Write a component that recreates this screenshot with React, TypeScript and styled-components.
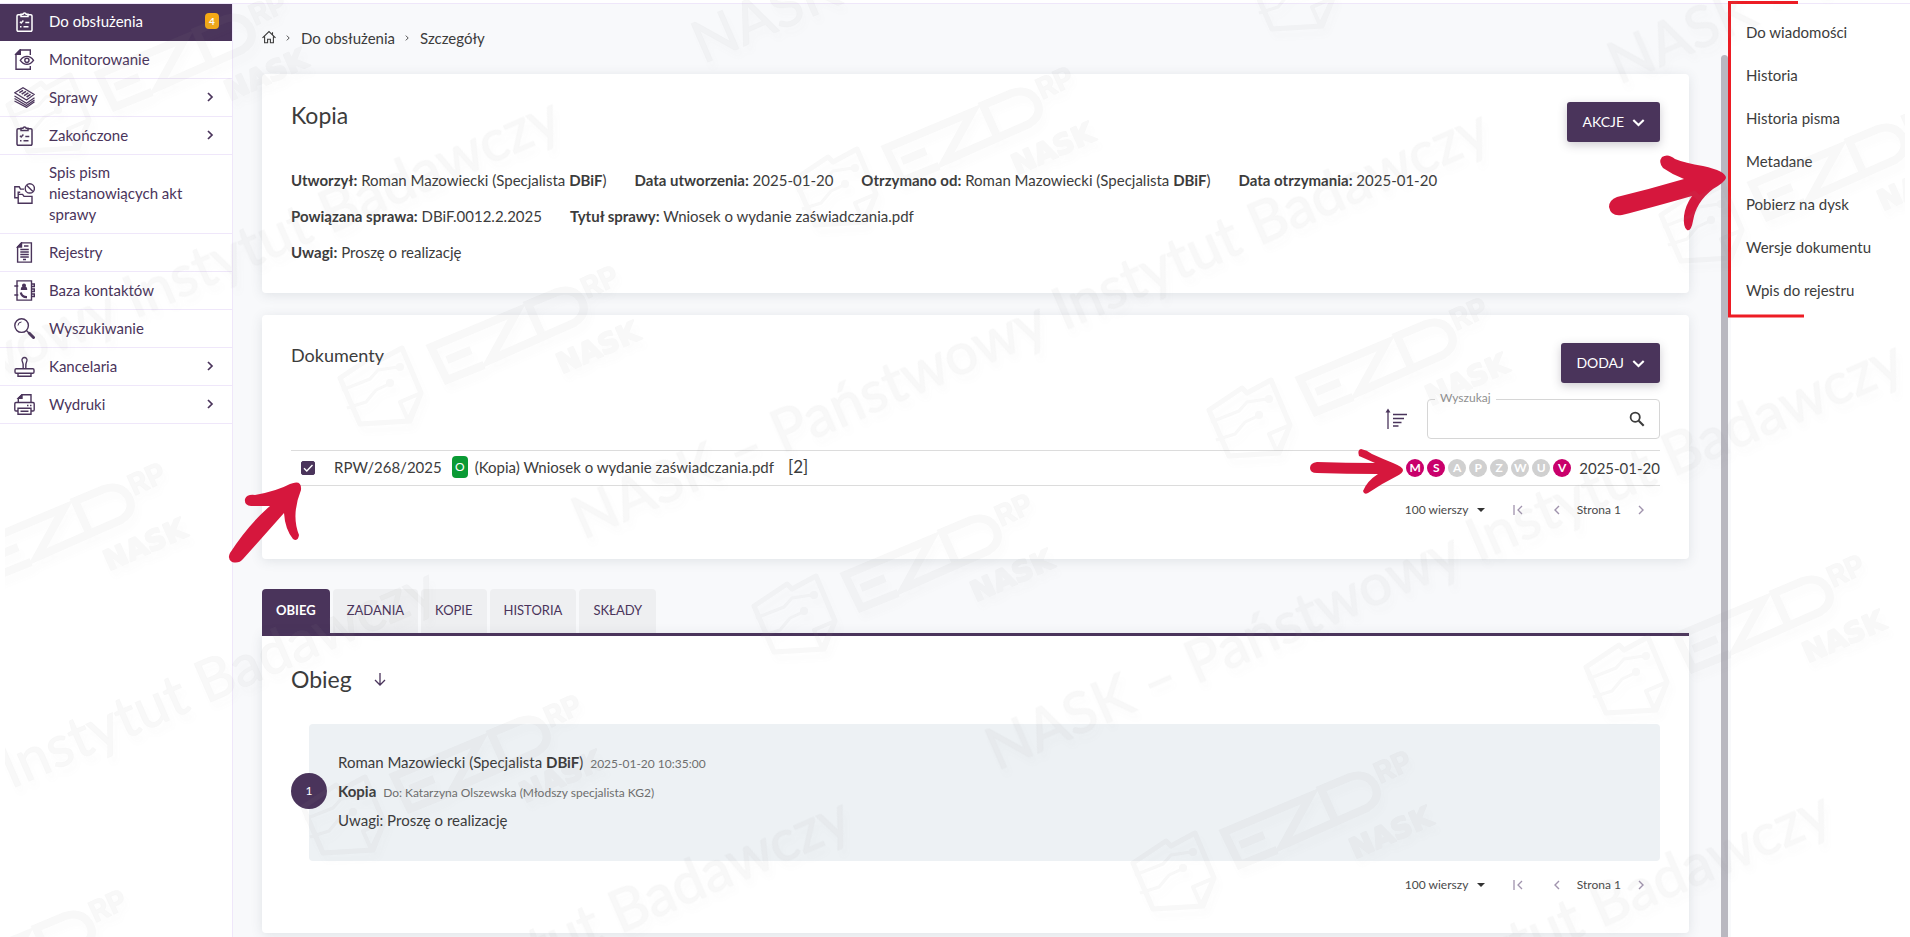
import React from 'react';
import styled, { createGlobalStyle, css } from 'styled-components';

const purple = '#4a345b';
const crimson = '#d6173d';
const ink = '#3c3c3c';

const GlobalStyle = createGlobalStyle`
  * { box-sizing: border-box; }
  body {
    margin: 0;
    background: #fff;
    color: ${ink};
    font: 400 15px/20px Lato, "Noto Sans", sans-serif;
  }
  button, input, select { font: inherit; color: inherit; }
  a { color: inherit; text-decoration: none; }
  h1, h2, p, ul, ol { margin: 0; padding: 0; font-weight: 400; }
  ul, ol { list-style: none; }
  b { font-weight: 700; }
`;

const Shell = styled.div`
  position: relative;
  display: grid;
  grid-template-columns: 233px minmax(0, 1fr) 182px;
  height: 100vh;
  padding-top: 4px;
  overflow: hidden;
  background: linear-gradient(#fff 0 3px, #efe7fa 3px 4px, #fff 4px);
`;

/* ---------- sidebar ---------- */

const Sidebar = styled.nav`
  border-right: 1px solid #efe7fa;
  background: #fff;
`;

const NavItem = styled.a<{ $active?: boolean }>`
  display: flex;
  align-items: center;
  gap: 14px;
  min-height: ${(p) => (p.$active ? 37 : 38)}px;
  padding: 7px 12px 8px 14px;
  border-bottom: 1px solid #efe7fa;
  color: ${purple};
  line-height: 21px;
  svg { flex: none; }
  ${(p) =>
    p.$active &&
    css`
      padding: 6px 13px 8px 14px;
      background: ${purple};
      border-color: ${purple};
      color: #fff;
    `}
`;

const NavLabel = styled.span`
  flex: 1;
  max-width: 150px;
  margin-right: auto;
`;

const Count = styled.span`
  display: grid;
  place-items: center;
  width: 14px;
  height: 16px;
  border-radius: 4px;
  background: #f5a914;
  color: #fff;
  font-size: 10px;
  font-weight: 700;
  line-height: 16px;
`;

const ChevronSlot = styled.span`
  display: grid;
  place-items: center;
  width: 20px;
`;

/* ---------- main column ---------- */

const Main = styled.main`
  display: flex;
  flex-direction: column;
  min-width: 0;
  padding: 24px 39px 0 29px;
  background: #f8f9fb;
`;

const Breadcrumbs = styled.ol`
  display: flex;
  align-items: center;
  gap: 9px;
  height: 20px;
  margin-bottom: 26px;
  li { display: flex; align-items: center; gap: 10px; }
`;

const Card = styled.section`
  flex: none;
  padding: 28px 29px 0;
  border-radius: 4px;
  background: #fff;
  box-shadow: 0 2px 12px rgba(60, 75, 90, 0.13);
`;

const DetailsCard = styled(Card)`
  min-height: 219px;
  margin-bottom: 22px;
`;

const DocumentsCard = styled(Card)`
  min-height: 244px;
  margin-bottom: 30px;
`;

const CardHead = styled.header`
  display: flex;
  justify-content: space-between;
  align-items: flex-start;
`;

const Title = styled.h1`
  font-size: 23px;
  line-height: 26px;
`;

const Subtitle = styled.h2`
  font-size: 18px;
  line-height: 24px;
`;

const PrimaryButton = styled.button`
  display: flex;
  align-items: center;
  gap: 8px;
  height: 40px;
  padding: 0 15px;
  border: 0;
  border-radius: 3px;
  background: ${purple};
  color: #fff;
  font-size: 14px;
  box-shadow: 0 3px 10px rgba(60, 50, 70, 0.25);
`;

const Facts = styled.div`
  display: grid;
  gap: 16px;
  margin-top: 28px;
`;

const FactRow = styled.div`
  display: flex;
  flex-wrap: wrap;
  gap: 28px;
`;

const Tools = styled.div`
  display: flex;
  justify-content: flex-end;
  align-items: center;
  gap: 20px;
  margin: 16px 0 11px;
`;

const IconButton = styled.button`
  display: grid;
  place-items: center;
  padding: 0;
  border: 0;
  background: none;
`;

const SearchField = styled.div`
  position: relative;
  display: flex;
  align-items: center;
  width: 233px;
  height: 40px;
  padding: 0 14px;
  border: 1px solid #d6d6d6;
  border-radius: 4px;
  label {
    position: absolute;
    top: -10px;
    left: 7px;
    padding: 0 5px;
    background: #fff;
    color: #8f8f8f;
    font-size: 12px;
    line-height: 16px;
  }
  input {
    flex: 1;
    min-width: 0;
    border: 0;
    outline: 0;
    background: none;
  }
`;

const DocumentTable = styled.table`
  width: 100%;
  border-collapse: collapse;
  td {
    height: 35px;
    padding: 0 0 2px;
    border-top: 1px solid #dcdcdc;
    border-bottom: 1px solid #dcdcdc;
    white-space: nowrap;
  }
`;

const DocumentName = styled.div`
  display: flex;
  align-items: center;
  gap: 7px;
`;

const Register = styled.a`
  margin-right: 3px;
`;

const OriginTag = styled.span`
  display: grid;
  place-items: center;
  width: 16px;
  height: 22px;
  border-radius: 4px;
  background: #0a9a34;
  color: #fff;
  font-size: 12px;
`;

const Versions = styled.span`
  margin-left: 7px;
  font-size: 17px;
`;

const CheckCell = styled.td`
  position: relative;
  width: 43px;
`;

const Tick = styled.input`
  display: block;
  appearance: none;
  width: 14px;
  height: 14px;
  margin: 1px 0 0 10px;
  border: 1px solid ${purple};
  border-radius: 2px;
  &:checked {
    background: ${purple}
      url("data:image/svg+xml,%3Csvg xmlns='http://www.w3.org/2000/svg' viewBox='0 0 12 12'%3E%3Cpath d='M2 6.200l2.800 2.800L10.500 3' fill='none' stroke='white' stroke-width='1.400'/%3E%3C/svg%3E");
  }
`;

const FlagList = styled.div`
  position: relative;
  display: flex;
  align-items: center;
  justify-content: flex-end;
  gap: 3px;
  padding-top: 1px;
  time { margin-left: 5px; }
`;

const Flag = styled.span<{ $on: boolean }>`
  display: grid;
  place-items: center;
  width: 18px;
  height: 18px;
  border-radius: 50%;
  background: ${(p) => (p.$on ? '#c9006b' : '#d0d0d0')};
  color: #fff;
  font-size: 12px;
  font-weight: 700;
  line-height: 18px;
`;

const Pager = styled.div<{ $top: number }>`
  display: flex;
  justify-content: flex-end;
  align-items: center;
  height: 20px;
  margin-top: ${(p) => p.$top}px;
  padding-right: 14px;
  font-size: 12px;
  color: #4a4a4a;
`;

const PageSize = styled.span`
  display: flex;
  align-items: center;
  gap: 6px;
  margin-right: 28px;
  select {
    appearance: none;
    width: 66px;
    padding: 0;
    border: 0;
    background: none;
  }
`;

const PagerStep = styled(IconButton)<{ $before?: number; $after?: number }>`
  margin: 0 ${(p) => p.$after || 0}px 0 ${(p) => p.$before || 0}px;
  color: #a093ad;
`;

/* ---------- tabs and flow panel ---------- */

const Tabs = styled.div`
  display: flex;
  gap: 3px;
  height: 44px;
  flex: none;
`;

const Tab = styled.button<{ $active?: boolean }>`
  padding: 0 14px 2px;
  border: 0;
  border-radius: 4px 4px 0 0;
  background: ${(p) => (p.$active ? purple : '#eeeff1')};
  color: ${(p) => (p.$active ? '#fff' : purple)};
  font-size: 13px;
  font-weight: ${(p) => (p.$active ? 700 : 400)};
`;

const FlowPanel = styled(Card)`
  min-height: 300px;
  padding-top: 30px;
  border-top: 3px solid ${purple};
  border-radius: 0 0 4px 4px;
`;

const FlowHead = styled.header`
  display: flex;
  align-items: center;
  gap: 22px;
`;

const Step = styled.article`
  display: flex;
  align-items: center;
  margin: 32px 0 0 18px;
  min-height: 137px;
  padding-bottom: 3px;
  border-radius: 4px;
  background: #edf1f4;
`;

const StepNumber = styled.span`
  display: grid;
  place-items: center;
  flex: none;
  width: 36px;
  height: 36px;
  margin: 0 11px 0 -18px;
  border-radius: 50%;
  background: ${purple};
  color: #fff;
  font-size: 12px;
`;

const StepBody = styled.div`
  display: grid;
  gap: 9px;
`;

const Small = styled.small`
  margin-left: 3px;
  color: #6e6e6e;
  font-size: 12px;
  line-height: 12px;
`;

/* ---------- right column ---------- */

const Aside = styled.aside`
  position: relative;
  display: flex;
  background: #fff;
`;

const ScrollTrack = styled.div`
  flex: none;
  width: 3px;
  background: #f8f9fb;
`;

const ScrollThumb = styled.div`
  position: absolute;
  top: 51px;
  bottom: 0;
  left: -7px;
  width: 7px;
  border-radius: 4px 4px 0 0;
  background: #b9b8c0;
`;

const ActionMenu = styled.ul`
  display: grid;
  align-content: start;
  gap: 23px;
  padding: 18px 0 0 15px;
`;

/* ---------- overlays ---------- */

const Overlay = styled.svg<{ $x: number; $y: number }>`
  position: absolute;
  left: ${(p) => p.$x}px;
  top: ${(p) => p.$y}px;
  z-index: 2;
  overflow: visible;
  pointer-events: none;
`;

/* Arrow that points at the row's status flags from their left. */
const FlagArrow = styled.svg`
  position: absolute;
  right: 257px;
  top: -8px;
  z-index: 2;
  overflow: visible;
  pointer-events: none;
`;

const WatermarkLayer = styled.svg`
  position: absolute;
  top: 0;
  left: 5px;
  width: calc(100% - 10px);
  height: 100%;
  z-index: 3;
  opacity: 0.07;
  pointer-events: none;
`;

/* ---------- icons ---------- */

const Icon = ({ children, size = 21, box = 21, width = 1.4 }: { children: React.ReactNode; size?: number; box?: number; width?: number }) => (
  <svg width={size} height={size} viewBox={`0 0 ${box} ${box}`} fill="none" stroke="currentColor" strokeWidth={width} aria-hidden="true">
    {children}
  </svg>
);

const ClipboardIcon = () => (
  <Icon width={1.5}>
    <path d="M7 3.700H4.200A1.200 1.200 0 0 0 3 4.900V19a1.200 1.200 0 0 0 1.200 1.200h12.600A1.200 1.200 0 0 0 18 19V4.900a1.200 1.200 0 0 0-1.200-1.200H14" />
    <path d="M7 5.600V3.200h1.900a1.700 1.700 0 0 1 3.300 0H14v2.400z" />
    <path d="M6 10.800l1.200 1.200 2.200-2.400M11.300 11.500h4M6 15.800h1.500M9.500 15.800h5" />
  </Icon>
);

const icons: Record<string, React.ReactNode> = {
  clipboard: <ClipboardIcon />,
  monitor: (
    <Icon>
      <path d="M16.300 6V1H6L2 5v15.300h14.300V17" />
      <path d="M6.300 1v4.200H2z" fill="currentColor" />
      <path d="M6.300 11.300c3.600-5.200 9.600-5.200 13.200 0-3.600 5.200-9.600 5.200-13.200 0z" />
      <circle cx="12.900" cy="11.300" r="2.100" />
    </Icon>
  ),
  stack: (
    <Icon width={1.2}>
      <path d="M.8 5.800L9 .8l11.200 6.600L12.500 13zM.5 9l12 7.300 8-5.600M.5 11.500l12 7 8-5.600M.5 14l12 6.400 8-5.600" />
      <path d="M5.300 5.700l3.800-2.400M7.700 7.200l4.300-2.800M10.100 8.700l4.300-2.800M12.600 10l4-2.600" strokeWidth="1.500" />
    </Icon>
  ),
  folders: (
    <Icon>
      <path d="M4 14.800H.8V3.800h4.400l1.300 2.300H10" />
      <path d="M4.200 20.200v-8.800h4.400l1.400 2h8v6.800zM4.200 11V9.200h2" />
      <circle cx="15.800" cy="5.400" r="4.600" />
      <path d="M12.600 2.300l6.300 6.300" />
    </Icon>
  ),
  register: (
    <Icon>
      <path d="M7.500.9h9.900v19.200H3.600V5z" />
      <path d="M7.500.9V5H3.600z" fill="currentColor" />
      <path d="M10 4h4.500M6.300 7.500h8.500M6.300 10h8.500M6.300 12.500h8.500M6.300 15h8.500M9 17.500h3" strokeWidth="1.300" />
    </Icon>
  ),
  contacts: (
    <Icon>
      <path d="M3 .9h14.500v19.200H3zM.3 6h4M.3 15h4M17.500 4h2.800v2.500h-2.800M17.500 9h2.800v2.500h-2.800M17.500 14h2.800v2.500h-2.800" />
      <circle cx="10" cy="5.500" r="1.300" fill="currentColor" />
      <path d="M7.500 9.200c0-3 5-3 5 0z" fill="currentColor" />
      <path d="M6.800 12.500c.6 3 2.600 4.700 6.200 4.600" strokeWidth="2.200" />
    </Icon>
  ),
  search: (
    <Icon>
      <circle cx="7.600" cy="7.600" r="6.800" />
      <path d="M4 7.500A3.600 3.600 0 0 1 7.500 4" strokeWidth="1" />
      <path d="M12.700 12.700l3 3" />
      <path d="M15.300 15.300l4.200 4.200" strokeWidth="3" strokeLinecap="round" />
    </Icon>
  ),
  stamp: (
    <Icon>
      <path d="M9.200 12.500c.3-3.500.1-5.500-1-7.500a2.500 2.500 0 1 1 4.600 0c-1.100 2-1.300 4-1 7.500" />
      <rect x="1" y="12.700" width="19" height="4.600" rx="1.200" />
      <path d="M4 17.300v2.900h13v-2.900" />
    </Icon>
  ),
  printer: (
    <Icon>
      <path d="M4.300 8.500V4.300L8 .8h9v7.700" />
      <path d="M8 .8v3.500H4.300z" fill="currentColor" />
      <path d="M4 17H2a1.200 1.200 0 0 1-1.200-1.200v-6A1.300 1.300 0 0 1 2 8.500h17a1.300 1.300 0 0 1 1.200 1.300v6A1.200 1.200 0 0 1 19 17h-2" />
      <path d="M4 14.300h13v6H4zM6.500 17.300h8M13 11.500h1.500M16 11.500h1.500" />
    </Icon>
  ),
};

const Chevron = ({ dir, size = 10, width = 2 }: { dir: 'right' | 'left' | 'down' | 'first'; size?: number; width?: number }) => {
  const d = { right: 'M3 1l4 4-4 4', left: 'M7 1L3 5l4 4', down: 'M1 3l4 4 4-4', first: 'M1 0v10M9 1L5 5l4 4' }[dir];
  return (
    <svg width={size} height={size} viewBox="0 0 10 10" fill="none" stroke="currentColor" strokeWidth={width} aria-hidden="true">
      <path d={d} />
    </svg>
  );
};

const HomeIcon = () => (
  <Icon size={14} box={14} width={1.1}>
    <path d="M.5 7.800L7 1.600l6.500 6.200M2.600 6.400v6.300h3V9.200h2.800v3.500h3V6.400M10.500 4.500V2.200" />
  </Icon>
);

const SortIcon = () => (
  <svg width="22" height="22" viewBox="0 0 22 22" fill="none" stroke={purple} strokeWidth="1.300" aria-hidden="true">
    <path d="M3 21V3M8 6.500h14M8 10.500h11M8 14.500h8.500M8 18h5.500" />
    <path d="M.5 4.500L3 .5l2.500 4z" fill={purple} stroke="none" />
  </svg>
);

const MagnifierIcon = () => (
  <Icon size={16} box={16} width={1.8}>
    <circle cx="6.200" cy="6.200" r="4.600" />
    <path d="M9.700 9.700l5 5" strokeWidth="2.100" />
  </Icon>
);

/* ---------- data ---------- */

const navigation = [
  { label: 'Do obsłużenia', icon: 'clipboard', count: 4 },
  { label: 'Monitorowanie', icon: 'monitor' },
  { label: 'Sprawy', icon: 'stack', more: true },
  { label: 'Zakończone', icon: 'clipboard', more: true },
  { label: 'Spis pism niestanowiących akt sprawy', icon: 'folders' },
  { label: 'Rejestry', icon: 'register' },
  { label: 'Baza kontaktów', icon: 'contacts' },
  { label: 'Wyszukiwanie', icon: 'search' },
  { label: 'Kancelaria', icon: 'stamp', more: true },
  { label: 'Wydruki', icon: 'printer', more: true },
];

const flags: [string, boolean][] = [
  ['M', true], ['S', true], ['A', false], ['P', false], ['Z', false], ['W', false], ['U', false], ['V', true],
];

const tabs = ['OBIEG', 'ZADANIA', 'KOPIE', 'HISTORIA', 'SKŁADY'];

const actions = ['Do wiadomości', 'Historia', 'Historia pisma', 'Metadane', 'Pobierz na dysk', 'Wersje dokumentu', 'Wpis do rejestru'];

/* Baseline starts of the slanted watermark captions. */
const captions = [
  [-346, 528], [583, 540], [703, 64], [1619, 85], [-470, 998], [997, 771], [-56, 1228], [925, 1222],
];

/* Shifts of the watermark logo from where its symbol is drawn. */
const logos = [
  [0, 0], [-332, -273], [455, -199], [414, 228], [869, 32], [-453, 197], [-37, 429], [793, 485], [1246, 289], [1321, -163], [-492, 624], [912, -395],
];

/* ---------- pieces ---------- */

const Person = () => (
  <>
    Roman Mazowiecki (Specjalista <b>DBiF</b>)
  </>
);

const Fact = ({ name, children }: { name: string; children: React.ReactNode }) => (
  <p>
    <b>{name}:</b> {children}
  </p>
);

const Pagination = ({ top }: { top: number }) => (
  <Pager $top={top}>
    <PageSize>
      <select aria-label="Liczba wierszy" defaultValue="100">
        <option value="100">100 wierszy</option>
      </select>
      <svg width="8" height="4" viewBox="0 0 8 4" aria-hidden="true">
        <path d="M0 0h8L4 4z" fill="#333" />
      </svg>
    </PageSize>
    <PagerStep $after={29} aria-label="Pierwsza strona"><Chevron dir="first" width={1.3} /></PagerStep>
    <PagerStep $after={15} aria-label="Poprzednia strona"><Chevron dir="left" width={1.4} /></PagerStep>
    Strona 1
    <PagerStep $before={15} aria-label="Następna strona"><Chevron dir="right" width={1.4} /></PagerStep>
  </Pager>
);

const Watermark = () => (
  <WatermarkLayer aria-hidden="true">
    <defs>
      <filter id="soft" x="-10%" y="-10%" width="120%" height="130%">
        <feDropShadow dx="4" dy="7" stdDeviation="3" floodColor="#888" floodOpacity="0.35" />
      </filter>
      <g id="ezd" fill="none" stroke="#909090" strokeWidth="5" strokeLinejoin="round">
        <path d="M340 378l33-22 5 5 24-13 19 45-11 28-50 3z" />
        <path d="M421 393l-21 9 8 18z" strokeWidth="4" />
        <path d="M342 390l28-11 8-9 20-3M347 408l19-6 10-12 13-6" strokeWidth="3" />
        <circle cx="400" cy="367" r="4" fill="#909090" stroke="none" />
        <circle cx="390" cy="383" r="4" fill="#909090" stroke="none" />
        <g strokeWidth="8" strokeLinejoin="miter">
          <path d="M484 365l-37 15-16-33 86-36-27 49 84-37q15-10 7-24-8-12-24-7l-29 12 13 29" />
          <path d="M447 360l24-10" />
        </g>
        <g fill="#909090" fontWeight="700">
          <text transform="translate(587 299) rotate(-25)" fontFamily="Inter, sans-serif" fontSize="29" strokeWidth="1">RP</text>
          <text transform="translate(562 374) rotate(-24)" fontFamily="DejaVu Sans, sans-serif" fontSize="28" strokeWidth="2">NASK</text>
        </g>
      </g>
    </defs>
    <g filter="url(#soft)" transform="translate(-5 0)">
      {logos.map(([x, y]) => (
        <use key={`${x},${y}`} href="#ezd" x={x} y={y} />
      ))}
      {captions.map(([x, y]) => (
        <text key={`${x},${y}`} transform={`translate(${x} ${y}) rotate(-23.500)`} fontSize="58" fill="#909090" stroke="#909090" strokeWidth="1">
          NASK – Państwowy Instytut Badawczy
        </text>
      ))}
    </g>
  </WatermarkLayer>
);

export default function App() {
  return (
    <>
      <GlobalStyle />
      <Shell>
        <Sidebar aria-label="Menu główne">
          {navigation.map((item, i) => (
            <NavItem key={item.label} href="#" $active={i === 0}>
              {icons[item.icon]}
              <NavLabel>{item.label}</NavLabel>
              {item.count && <Count>{item.count}</Count>}
              {item.more && <ChevronSlot><Chevron dir="right" width={1.7} /></ChevronSlot>}
            </NavItem>
          ))}
        </Sidebar>

        <Main>
          <Breadcrumbs>
            <li><a href="#" aria-label="Strona główna"><HomeIcon /></a></li>
            <li><Chevron dir="right" size={6} width={1.5} /><a href="#">Do obsłużenia</a></li>
            <li><Chevron dir="right" size={6} width={1.5} />Szczegóły</li>
          </Breadcrumbs>

          <DetailsCard>
            <CardHead>
              <Title>Kopia</Title>
              <PrimaryButton>AKCJE <Chevron dir="down" size={13} width={1.6} /></PrimaryButton>
            </CardHead>
            <Facts>
              <FactRow>
                <Fact name="Utworzył"><Person /></Fact>
                <Fact name="Data utworzenia">2025-01-20</Fact>
                <Fact name="Otrzymano od"><Person /></Fact>
                <Fact name="Data otrzymania">2025-01-20</Fact>
              </FactRow>
              <FactRow>
                <Fact name="Powiązana sprawa">DBiF.0012.2.2025</Fact>
                <Fact name="Tytuł sprawy">Wniosek o wydanie zaświadczania.pdf</Fact>
              </FactRow>
              <FactRow>
                <Fact name="Uwagi">Proszę o realizację</Fact>
              </FactRow>
            </Facts>
          </DetailsCard>

          <DocumentsCard>
            <CardHead>
              <Subtitle>Dokumenty</Subtitle>
              <PrimaryButton>DODAJ <Chevron dir="down" size={13} width={1.6} /></PrimaryButton>
            </CardHead>
            <Tools>
              <IconButton aria-label="Sortuj"><SortIcon /></IconButton>
              <SearchField>
                <label htmlFor="search">Wyszukaj</label>
                <input id="search" />
                <IconButton aria-label="Szukaj"><MagnifierIcon /></IconButton>
              </SearchField>
            </Tools>
            <DocumentTable>
              <tbody>
                <tr>
                  <CheckCell>
                    <Tick type="checkbox" defaultChecked aria-label="Zaznacz dokument" />
                    <Overlay $x={-63} $y={30} width="73" height="82" viewBox="228 480 73 82" fill={crimson} aria-hidden="true">
                      <path d="M230 552Q248 524 270 505Q260 505 251 505Q244 504 245 498Q247 493 255 494Q277 490 290 483Q302 478 301 489Q291 514 299 534Q298 541 293 538Q285 528 284 512L243 558Q239 563 232 561Q227 558 230 552z" />
                    </Overlay>
                  </CheckCell>
                  <td>
                    <DocumentName>
                      <Register href="#">RPW/268/2025</Register>
                      <OriginTag>O</OriginTag>
                      <a href="#">(Kopia) Wniosek o wydanie zaświadczania.pdf</a>
                      <Versions>[2]</Versions>
                    </DocumentName>
                  </td>
                  <td>
                    <FlagList>
                      {flags.map(([letter, on]) => (
                        <Flag key={letter} $on={on}>{letter}</Flag>
                      ))}
                      <time>2025-01-20</time>
                      <FlagArrow width="94" height="46" viewBox="1308 449 94 46" fill={crimson} aria-hidden="true">
                        <path d="M1309 468Q1309 463 1316 462Q1345 463 1374 463Q1365 459 1358 456Q1356 450 1360 449Q1366 450 1371 454Q1382 459 1392 463Q1402 467 1402 470Q1402 473 1396 476Q1380 484 1367 493Q1363 495 1362 491Q1366 481 1377 474Q1345 474 1316 473Q1309 473 1309 468z" />
                      </FlagArrow>
                    </FlagList>
                  </td>
                </tr>
              </tbody>
            </DocumentTable>
            <Pagination top={14} />
          </DocumentsCard>

          <Tabs role="tablist">
            {tabs.map((tab, i) => (
              <Tab key={tab} role="tab" aria-selected={i === 0} $active={i === 0}>{tab}</Tab>
            ))}
          </Tabs>
          <FlowPanel>
            <FlowHead>
              <Title>Obieg</Title>
              <IconButton aria-label="Zmień kolejność">
                <svg width="12" height="13" viewBox="0 0 12 13" fill="none" stroke={purple} strokeWidth="1.300" aria-hidden="true">
                  <path d="M6 0v12M1 7l5 5 5-5" />
                </svg>
              </IconButton>
            </FlowHead>
            <Step>
              <StepNumber>1</StepNumber>
              <StepBody>
                <p><Person /> <Small>2025-01-20 10:35:00</Small></p>
                <p><b>Kopia</b> <Small>Do: Katarzyna Olszewska (Młodszy specjalista KG2)</Small></p>
                <p>Uwagi: Proszę o realizację</p>
              </StepBody>
            </Step>
            <Pagination top={14} />
          </FlowPanel>
        </Main>

        <Aside>
          <ScrollTrack />
          <ScrollThumb />
          <ActionMenu>
            {actions.map((action) => (
              <li key={action}><a href="#">{action}</a></li>
            ))}
          </ActionMenu>
          <Overlay $x={-120} $y={-4} width="200" height="320" viewBox="1608 0 200 320" aria-hidden="true">
            <path d="M1798 2.500h-68.500v313.500H1804" fill="none" stroke="#ed1c24" strokeWidth="3" />
            <path d="M1609 207Q1609 200 1617 197Q1650 189 1684 179Q1673 175 1663 168Q1658 162 1662 157Q1668 153 1675 159Q1685 163 1703 166Q1726 171 1726 178Q1725 182 1713 189Q1696 202 1693 221Q1691 232 1687 230Q1683 227 1684 216Q1685 206 1692 196Q1650 208 1622 215Q1611 217 1609 207z" fill={crimson} />
          </Overlay>
        </Aside>
        <Watermark />
      </Shell>
    </>
  );
}
